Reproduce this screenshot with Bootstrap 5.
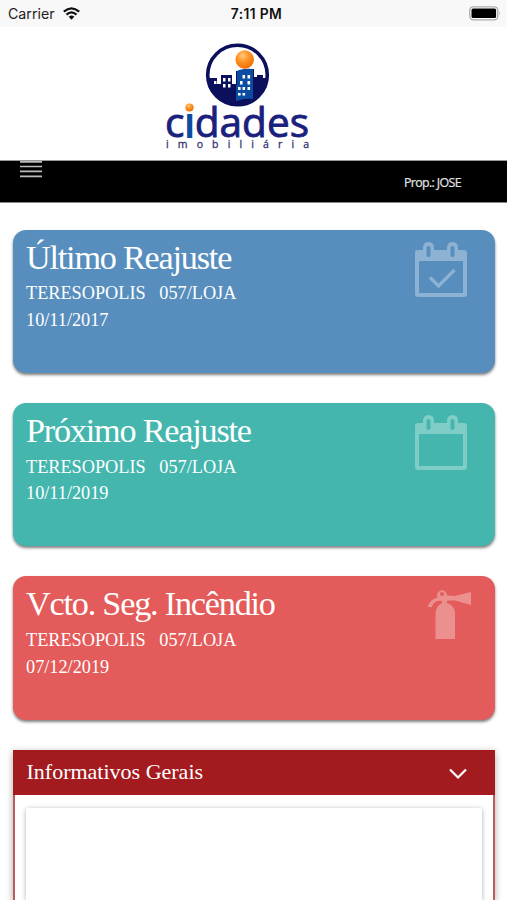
<!DOCTYPE html>
<html lang="pt-BR">
<head>
<meta charset="utf-8">
<meta name="viewport" content="width=device-width, initial-scale=1">
<title>Cidades Imobiliária</title>
<link href="https://cdn.jsdelivr.net/npm/bootstrap@5.3.0/dist/css/bootstrap.min.css" rel="stylesheet">
<style>
body { font-family: "Liberation Serif", serif; background: #fff; height: 900px; }
svg { display: block; flex: none; }
.status-bar { height: 27px; background: #f8f8f8; font-family: Inter, sans-serif; font-size: 14.2px; color: #222; padding: 0 6px 0 8px; }
.status-bar > * { flex: 1 1 0; }
.clock { font-size: 13.8px; letter-spacing: .4px; font-weight: 600; color: #111; padding-left: 4px; padding-top: 1px; }
.brand { height: 133px; padding-top: 8px; }
.brand svg { margin-right: 32px; }
.menu-bar { height: 43px; background: #000; border-top: 1px solid #999; border-bottom: 1px solid #888; padding: 0 46px 0 20px; color: #e4e4e4; }
.owner { font-family: "Open Sans", sans-serif; font-size: 12.4px; letter-spacing: -.62px; line-height: 16px; margin-top: 14px; -webkit-text-stroke: .2px #e4e4e4; }
.page-body { padding: 26.5px 12px 0 13px; }
.tile { height: 143.4px; border-radius: 13px; color: #fff; padding: 9px 28px 0 13px; margin-bottom: 30px; box-shadow: 0 2px 3px rgba(0,0,0,.5); }
.tile-blue { background: #578ebe; }
.tile-green { background: #44b6ae; }
.tile-red { background: #e35b5a; }
.tile h2 { font-size: 34.2px; letter-spacing: -1.2px; line-height: 38px; font-weight: 400; margin: 0 0 3.7px; white-space: nowrap; }
.tile p { font-size: 18.25px; line-height: 26.9px; margin: 0; white-space: pre; }
.tile svg { opacity: .32; margin-top: 3px; }
.tile-red svg { margin-right: -9px; }
.panel { height: 150.3px; box-shadow: 0 2px 7px rgba(0,0,0,.35); }
.panel-top { height: 45px; background: #a31b1f; color: #fff; padding: 0 28px 1px 13.5px; font-size: 22px; }
.panel-content { height: 105px; border: 2px solid #bd5c5c; border-width: 0 2px; padding: 13px 11px 0 11px; overflow: hidden; }
.panel-inner { height: 92px; border-radius: 2px 2px 0 0; box-shadow: 0 1px 5px rgba(0,0,0,.32); }
</style>
<script src="https://cdn.jsdelivr.net/npm/bootstrap@5.3.0/dist/js/bootstrap.bundle.min.js"></script>
</head>
<body class="overflow-hidden">
<header>
  <div class="status-bar d-flex align-items-center">
    <div class="d-flex align-items-center">
      <span>Carrier</span>
      <svg class="ms-2" width="17" height="13" viewBox="0 0 17 13" fill="none" stroke="#111" stroke-width="2.2"><path d="M.8 4.7Q8.500-2 16.200 4.700M3.500 7.600Q8.500 3.200 13.500 7.600"/><path d="M5.700 9.700Q8.500 7.500 11.300 9.700L8.500 12.700Z" fill="#111" stroke="none"/></svg>
    </div>
    <div class="clock text-center">7:11 PM</div>
    <div class="d-flex justify-content-end">
      <svg width="32" height="15" viewBox="0 0 32 15"><rect x=".8" y=".8" width="28" height="13" rx="3.500" fill="#fff" stroke="#aaa" stroke-width="1.300"/><rect x="2.500" y="2.500" width="24.600" height="9.600" rx="1.500"/><path d="M30.300 5.300q1.500 2 0 4z" fill="#999"/></svg>
    </div>
  </div>
  <div class="brand d-flex justify-content-center">
    <svg width="165" height="125" viewBox="0 0 165 125">
      <defs>
        <radialGradient id="sun" cx=".4" cy=".3" r=".7"><stop offset="0" stop-color="#ffca82"/><stop offset=".45" stop-color="#ff9629"/><stop offset="1" stop-color="#ef6c00"/></radialGradient>
        <clipPath id="disc"><circle cx="82.500" cy="40" r="31"/></clipPath>
      </defs>
      <circle cx="82.500" cy="40" r="29.800" fill="#fff" stroke="#0c0f5c" stroke-width="3.600"/>
      <g clip-path="url(#disc)">
        <path fill="#0c0f5c" d="M50 44H54V43H62V49H66V40H77V49H81V36H97V34H99V42H102V40H108V43H115V75H50Z"/>
        <path fill="#0b4ca3" d="M84 35Q91 33 98 34V64Q91 63 81 66V50H82V36Z"/>
      </g>
      <path fill="#fff" d="M59 46h2.500v3h-2.500zM68 43h2.500v3.500h-2.500zM73 43h2.500v3.500h-2.500zM68 49h2.500v3.500h-2.500zM73 49h2.500v3.500h-2.500zM87.500 40h2.600v3.500h-2.600zM92.500 40h2.600v3.500h-2.600zM85 46h2.600v3.500H85zM92.500 46h2.600v3.500h-2.600zM83 52h2.600v3H83zM87.500 52h2.600v3h-2.600zM92.500 52h2.600v3h-2.600zM83 58h2.600v2.600H83zM87.500 58h2.600v2.600h-2.600z"/>
      <circle cx="89.700" cy="24.500" r="9.300" fill="url(#sun)"/>
      <text x="10" y="101.500" textLength="144" lengthAdjust="spacingAndGlyphs" font-family="Open Sans, sans-serif" font-size="41" fill="#1b1f7d" stroke="#1b1f7d" stroke-width=".9">c<tspan fill="#0b4ca3" stroke="#0b4ca3" stroke-width="1.800">ı</tspan>dades</text>
      <circle cx="34.500" cy="72.500" r="4.100" fill="url(#sun)"/>
      <text x="11" y="113" textLength="143" font-family="Open Sans, sans-serif" font-size="10.500" fill="#35366f" stroke="#35366f" stroke-width=".3">imobiliária</text>
    </svg>
  </div>
  <nav class="menu-bar d-flex justify-content-between align-items-start">
    <svg width="22" height="18" viewBox="0 0 22 18" stroke="#bbb" stroke-width="1.700"><path d="M0 .8H22M0 5.500H22M0 10.300H22M0 15.300H22"/></svg>
    <span class="owner">Prop.: JOSE</span>
  </nav>
</header>
<main class="page-body">
  <section class="tile tile-blue d-flex justify-content-between">
    <div><h2>Último Reajuste</h2><p>TERESOPOLIS   057/LOJA</p><p>10/11/2017</p></div>
    <svg width="52" height="56" viewBox="0 0 52 56" fill="#fff"><path fill-rule="evenodd" d="M3 8H8V6Q8 0 13.500 0T19 6V8H32V6Q32 0 37.500 0T43 6V8H49Q52 8 52 11V52Q52 55 49 55H3Q0 55 0 52V11Q0 8 3 8ZM4 19V51H48V19ZM11.500 6V13Q11.500 15 13.500 15T15.500 13V6Q15.500 4 13.500 4T11.500 6ZM35.500 6V13Q35.500 15 37.500 15T39.500 13V6Q39.500 4 37.500 4T35.500 6Z"/><path d="M15 35.500L23.500 44L39.500 28" fill="none" stroke="#fff" stroke-width="3.200"/></svg>
  </section>
  <section class="tile tile-green d-flex justify-content-between">
    <div><h2>Próximo Reajuste</h2><p>TERESOPOLIS   057/LOJA</p><p>10/11/2019</p></div>
    <svg width="52" height="56" viewBox="0 0 52 56" fill="#fff"><path fill-rule="evenodd" d="M3 8H8V6Q8 0 13.500 0T19 6V8H32V6Q32 0 37.500 0T43 6V8H49Q52 8 52 11V52Q52 55 49 55H3Q0 55 0 52V11Q0 8 3 8ZM4 19V51H48V19ZM11.500 6V13Q11.500 15 13.500 15T15.500 13V6Q15.500 4 13.500 4T11.500 6ZM35.500 6V13Q35.500 15 37.500 15T39.500 13V6Q39.500 4 37.500 4T35.500 6Z"/></svg>
  </section>
  <section class="tile tile-red d-flex justify-content-between">
    <div><h2>Vcto. Seg. Incêndio</h2><p>TERESOPOLIS   057/LOJA</p><p>07/12/2019</p></div>
    <svg width="48" height="56" viewBox="0 0 48 56"><path fill="#fff" fill-rule="evenodd" d="M9.500 9.500A5 5 0 1 1 19 7.500L27 8L43 4V17L27 12.500H19V15Q27 18 27 25V51H7.500V25Q8 18 14 15V13Q7 12 4 18V19H0Q1 12 9.500 9.500ZM14 4A2 2 0 1 0 14 8A2 2 0 1 0 14 4Z"/></svg>
  </section>
  <section class="panel">
    <div class="panel-top d-flex align-items-center justify-content-between">
      <span>Informativos Gerais</span>
      <svg class="mt-1" width="18" height="12" viewBox="0 0 18 12" fill="none" stroke="#fff" stroke-width="2.200"><path d="M1 1.500L9 9.500L17 1.500"/></svg>
    </div>
    <div class="panel-content"><div class="panel-inner"></div></div>
  </section>
</main>
</body>
</html>
